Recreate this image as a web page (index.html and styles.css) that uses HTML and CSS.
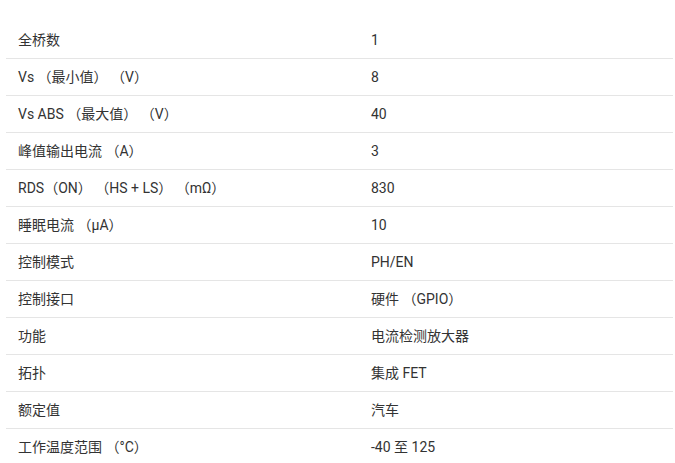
FILE: index.html
```html
<!DOCTYPE html>
<html lang="zh">
<head>
<meta charset="utf-8">
<link rel="stylesheet" href="styles.css">
</head>
<body>
<table class="params">
<tbody>
<tr><td class="k">全桥数</td><td class="v">1</td></tr>
<tr><td class="k">Vs （最小值） （V）</td><td class="v">8</td></tr>
<tr><td class="k">Vs ABS （最大值） （V）</td><td class="v">40</td></tr>
<tr><td class="k">峰值输出电流 （A）</td><td class="v">3</td></tr>
<tr><td class="k">RDS（ON） （HS + LS） （mΩ）</td><td class="v">830</td></tr>
<tr><td class="k">睡眠电流 （µA）</td><td class="v">10</td></tr>
<tr><td class="k">控制模式</td><td class="v">PH/EN</td></tr>
<tr><td class="k">控制接口</td><td class="v">硬件 （GPIO）</td></tr>
<tr><td class="k">功能</td><td class="v">电流检测放大器</td></tr>
<tr><td class="k">拓扑</td><td class="v">集成 FET</td></tr>
<tr><td class="k">额定值</td><td class="v">汽车</td></tr>
<tr><td class="k">工作温度范围 （°C）</td><td class="v">-40 至 125</td></tr>
</tbody>
</table>
</body>
</html>
```
FILE: styles.css
```css
html, body {
  margin: 0;
  padding: 0;
  background: #fff;
}
body {
  padding: 22px 2px 0 6px;
  font-family: Roboto, "Noto Sans CJK SC", sans-serif;
  font-size: 14px;
  color: #333;
}
.params {
  width: 667px;
  border-collapse: collapse;
}
.params td {
  padding: 8px 12px;
  line-height: 20px;
  border-bottom: 1px solid #e5e5e5;
  vertical-align: middle;
  white-space: nowrap;
}
.params .k {
  width: 329px;
}
```
